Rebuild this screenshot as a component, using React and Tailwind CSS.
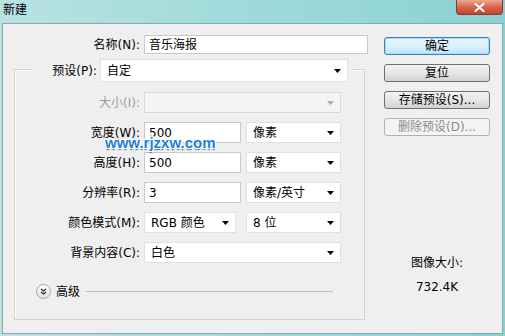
function Arrow({ disabled }) {
  return (
    <svg width="7" height="4" viewBox="0 0 7 4">
      <path d="M0 0h7L3.5 4z" fill={disabled ? "#a8a8a8" : "#000"} />
    </svg>
  );
}

function Select({ value, className = "", disabled }) {
  return (
    <div
      className={`flex h-full items-center justify-between border pl-[6px] pr-[6px] ${
        disabled ? "border-[#d9d9d9] bg-[#f4f4f4]" : "border-[#e0e0e0] bg-white"
      } ${className}`}
    >
      <span>{value}</span>
      <Arrow disabled={disabled} />
    </div>
  );
}

function Input({ value, className = "" }) {
  return (
    <div className={`flex h-full items-center border border-[#c6c9ce] bg-white pl-[4px] ${className}`}>
      {value}
    </div>
  );
}

function Row({ label, disabled, first, children }) {
  return (
    <div className={`${first ? "mt-[10px]" : "mt-[9px]"} flex h-[21px] items-center`}>
      <div className={`w-[125px] text-right ${disabled ? "text-[#9c9c9c]" : ""}`}>{label}</div>
      <div className="ml-[4px] flex h-full">{children}</div>
    </div>
  );
}

function Button({ children, primary, disabled }) {
  let look = "border-[#707070] bg-linear-to-b from-[#f3f3f3] via-[#e6e6e6] to-[#d2d2d2]";
  if (primary)
    look =
      "border-[#3c7fb1] bg-linear-to-b from-[#eaf6fd] via-[#d9f0fc] to-[#bee6fd] shadow-[inset_0_0_0_1px_#a9dcf6]";
  if (disabled) look = "border-[#adb2b5] bg-[#f4f4f4] text-[#8a8a8a]";
  return (
    <div className={`flex h-[18px] w-[106px] items-center justify-center rounded-[3px] border ${look}`}>
      {children}
    </div>
  );
}

export default function App() {
  return (
    <div className="relative flex h-[336px] w-[505px] flex-col overflow-hidden bg-linear-to-r from-[#b9e2e3] via-[#9fdada] to-[#8ad2d2] font-['Tahoma','DejaVu_Sans','Noto_Sans_CJK_SC',sans-serif] text-[12px] leading-none text-black">
      {/* TITLE BAR */}
      <div className="flex h-[23px] items-start">
        <div className="pl-[3px] pt-[4px]">新建</div>
        <div className="ml-auto mr-[2px] flex h-[15px] w-[47px] items-center justify-center rounded-b-[4px] border border-t-0 border-[#8a3b2f] bg-linear-to-b from-[#e9a995] via-[#d8634b] to-[#c4452f]">
          <svg width="11" height="9" viewBox="0 0 11 9">
            <path d="M1.5 1l8 7M9.5 1l-8 7" stroke="#fff" strokeWidth="2.2" strokeLinecap="round" />
          </svg>
        </div>
      </div>

      {/* CLIENT */}
      <div className="mx-[2px] mb-[2px] flex flex-1 border border-[#8ea8aa] bg-[#efefef]">
        {/* LEFT */}
        <div className="pl-[11px] pt-[11px]">
          <div className="flex h-[19px] items-center">
            <div className="w-[126px] text-right">名称(N):</div>
            <Input value="音乐海报" className="ml-[4px] w-[224px] border-[#abb9c6]" />
          </div>

          <div className="mt-[15px] h-[251px] w-[351px] border border-[#d2d2d2] shadow-[inset_1px_1px_0_#fff]">
            <div className="-mt-[11px] ml-[18px] flex h-[23px] w-[319px] items-center bg-[#efefef] pr-[4px]">
              <div className="w-[64px] text-right">预设(P):</div>
              <Select value="自定" className="ml-[3px] w-[248px]" />
            </div>

            <Row label="大小(I):" disabled first>
              <Select value="" disabled className="w-[197px]" />
            </Row>
            <Row label="宽度(W):">
              <Input value="500" className="w-[97px]" />
              <Select value="像素" className="ml-[5px] w-[95px]" />
            </Row>
            <Row label="高度(H):">
              <Input value="500" className="w-[97px]" />
              <Select value="像素" className="ml-[5px] w-[95px]" />
            </Row>
            <Row label="分辨率(R):">
              <Input value="3" className="w-[97px]" />
              <Select value="像素/英寸" className="ml-[5px] w-[95px]" />
            </Row>
            <Row label="颜色模式(M):">
              <Select value="RGB 颜色" className="w-[92px]" />
              <Select value="8 位" className="ml-[10px] w-[95px]" />
            </Row>
            <Row label="背景内容(C):">
              <Select value="白色" className="w-[197px]" />
            </Row>

            {/* ADVANCED */}
            <div className="ml-[21px] mt-[21px] flex items-center">
              <div className="flex h-[15px] w-[15px] items-center justify-center rounded-full border border-[#a9a9a9] bg-linear-to-b from-[#ffffff] to-[#e2e2e2]">
                <svg width="7" height="7" viewBox="0 0 7 7">
                  <path d="M1 1l2.5 2 2.5-2M1 4l2.5 2 2.5-2" stroke="#222" strokeWidth="1.1" fill="none" />
                </svg>
              </div>
              <div className="ml-[5px]">高级</div>
              <div className="ml-[6px] h-px w-[247px] bg-[#bdbdbd]" />
            </div>
          </div>
        </div>

        {/* RIGHT */}
        <div className="ml-[16px] flex flex-col items-center pt-[13px]">
          <div className="flex flex-col gap-[9px]">
            <Button primary>确定</Button>
            <Button>复位</Button>
            <Button>存储预设(S)...</Button>
            <Button disabled>删除预设(D)...</Button>
          </div>
          <div className="mt-[121px]">图像大小:</div>
          <div className="mt-[12px]">732.4K</div>
        </div>
      </div>

      {/* WATERMARK */}
      <div className="absolute left-[105px] top-[134px] font-['Liberation_Sans',sans-serif] text-[15px] font-bold leading-[18px] text-[#1f7fd6] [text-shadow:1px_1px_0_#fff,-1px_-1px_0_#fff,1px_-1px_0_#fff,-1px_1px_0_#fff,0_2px_1px_#4a6f8f]">
        www.rjzxw.com
      </div>
    </div>
  );
}
